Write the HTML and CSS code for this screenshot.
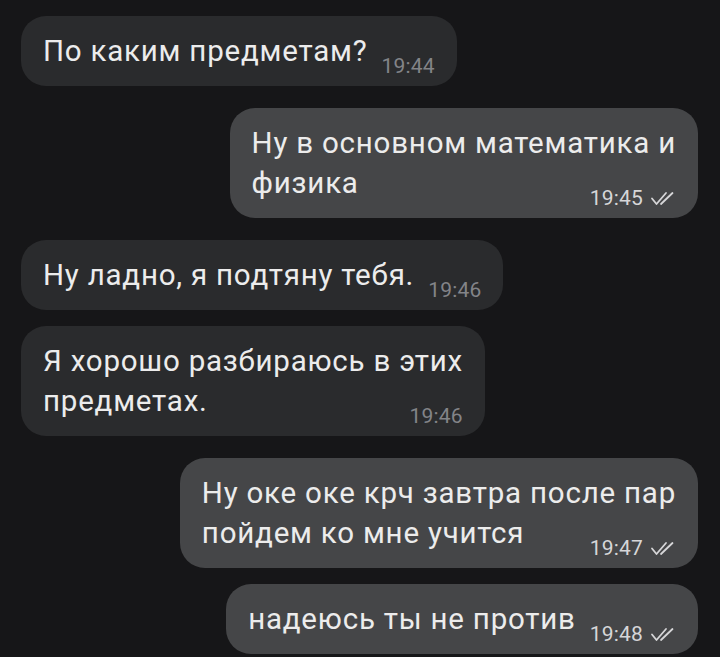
FILE: index.html
```html
<!DOCTYPE html>
<html lang="ru">
<head>
<meta charset="utf-8">
<link rel="stylesheet" href="styles.css">
</head>
<body>
<div class="chat">
  <div class="row in">
    <div class="bubble">По каким предметам?<span class="meta"><span class="time">19:44</span></span></div>
  </div>
  <div class="row out group">
    <div class="bubble">Ну в основном математика и<br>физика<span class="meta"><span class="time">19:45</span><svg class="ticks" width="28" height="17" viewBox="0 0 28 17"><path d="M2 8.5 L6.5 14 L16 3 M11 14 L22.5 3" fill="none" stroke="currentColor" stroke-width="1.8" stroke-linecap="round" stroke-linejoin="round"/></svg></span></div>
  </div>
  <div class="row in group">
    <div class="bubble">Ну ладно, я подтяну тебя.<span class="meta"><span class="time">19:46</span></span></div>
  </div>
  <div class="row in">
    <div class="bubble">Я хорошо разбираюсь в этих<br>предметах.<span class="meta"><span class="time">19:46</span></span></div>
  </div>
  <div class="row out group">
    <div class="bubble">Ну оке оке крч завтра после пар<br>пойдем ко мне учится<span class="meta"><span class="time">19:47</span><svg class="ticks" width="28" height="17" viewBox="0 0 28 17"><path d="M2 8.5 L6.5 14 L16 3 M11 14 L22.5 3" fill="none" stroke="currentColor" stroke-width="1.8" stroke-linecap="round" stroke-linejoin="round"/></svg></span></div>
  </div>
  <div class="row out">
    <div class="bubble">надеюсь ты не против<span class="meta"><span class="time">19:48</span><svg class="ticks" width="28" height="17" viewBox="0 0 28 17"><path d="M2 8.5 L6.5 14 L16 3 M11 14 L22.5 3" fill="none" stroke="currentColor" stroke-width="1.8" stroke-linecap="round" stroke-linejoin="round"/></svg></span></div>
  </div>
</div>
</body>
</html>
```
FILE: styles.css
```css
html, body {
  margin: 0;
  padding: 0;
  background: #161618;
  height: 100%;
  overflow: hidden;
}
.chat {
  display: flex;
  flex-direction: column;
  padding: 16px 22px 0 21px;
  font-family: Roboto, "Noto Sans", sans-serif;
}
.row {
  display: flex;
  margin-top: 16px;
}
.row:first-child {
  margin-top: 0;
}
.row.group {
  margin-top: 22px;
}
.row.out {
  justify-content: flex-end;
}
.bubble {
  display: flow-root;
  padding: 15px 22px 15px 22px;
  border-radius: 25px;
  font-size: 29.5px;
  letter-spacing: 0.78px;
  line-height: 40px;
  color: #ececec;
  white-space: nowrap;
}
.in .bubble {
  background: #2a2b2d;
}
.out .bubble {
  background: #454648;
}
.meta {
  float: right;
  display: flex;
  align-items: center;
  margin: 25px 0 -6px 14px;
  font-size: 21px;
  letter-spacing: 0.2px;
  line-height: 20px;
}
.in .meta {
  color: #838488;
}
.out .meta {
  color: #d6d6d8;
}
.ticks {
  display: block;
  margin-left: 7px;
  margin-right: -2px;
}
```
